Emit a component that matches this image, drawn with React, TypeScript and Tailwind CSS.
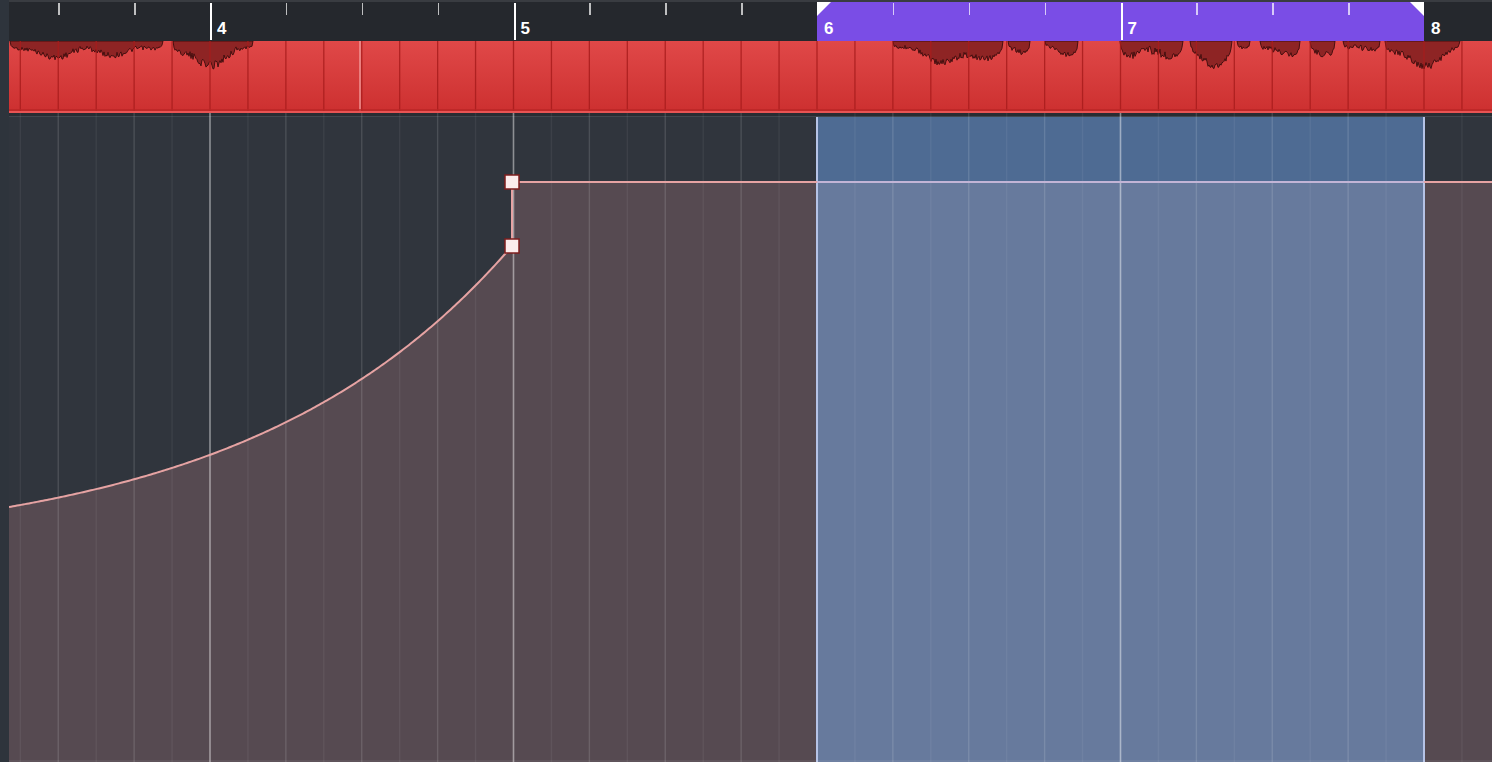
import React from "react";

const BAR = 303.5;
const EIGHTH = BAR / 8;
const LANE_TOP = 113;
const LANE_H = 762 - LANE_TOP;
const SEL_L = 817;
const SEL_R = 1424;

function rand(i: number, seed: number) {
  const s = Math.sin(i * 12.9898 + seed * 78.233) * 43758.5453;
  return s - Math.floor(s);
}

const segs: [number, number, number, number][] = [
  [10, 163, 20, 1],
  [173, 253, 29, 2],
  [893, 1003, 25, 3],
  [1008, 1030, 21, 4],
  [1045, 1078, 18, 5],
  [1120, 1183, 27, 6],
  [1190, 1232, 25, 7],
  [1237, 1250, 14, 8],
  [1260, 1300, 21, 9],
  [1310, 1335, 21, 10],
  [1343, 1380, 19, 11],
  [1385, 1460, 25, 12],
];

function wave(x0: number, x1: number, depth: number, seed: number) {
  let d = `M${x0 - 9} 0`;
  for (let x = x0; x <= x1; x++) {
    const t = (x - x0) / (x1 - x0);
    const env = Math.pow(Math.sin(Math.PI * t), 0.35);
    const slow =
      0.68 + 0.2 * Math.sin(x * 0.11 + seed * 1.7) + 0.14 * Math.sin(x * 0.037 + seed);
    const n = (rand(x, seed) - 0.5) * 0.3;
    const y = Math.max(0, depth * env * (slow + n));
    d += ` L${x - 9} ${y.toFixed(1)}`;
  }
  d += ` L${x1 - 9} 0 Z`;
  return d;
}

const eighths: { x: number; k: number }[] = [];
for (let k = -5; k <= 34; k++) {
  const x = 210 + k * EIGHTH;
  if (x > 9 && x < 1492) eighths.push({ x, k });
}

const curveY = (x: number) => {
  const t = (x - 9) / (512 - 9);
  return 507 - (261 * (Math.exp(1.9 * t) - 1)) / (Math.exp(1.9) - 1);
};
const curvePts: string[] = [];
for (let x = 9; x <= 512; x += 2) {
  curvePts.push(`${(x - 9).toFixed(1)} ${(curveY(x) - LANE_TOP).toFixed(2)}`);
}
curvePts.push(`${512 - 9} ${246 - LANE_TOP}`);
const curveD = "M" + curvePts.join(" L");
const W = 1483;
const fillD =
  curveD +
  ` L${512 - 9} ${182 - LANE_TOP} L${W} ${182 - LANE_TOP} L${W} ${LANE_H} L0 ${LANE_H} Z`;

function Ruler() {
  const bars = [3, 4, 5, 6, 7, 8];
  return (
    <div className="h-[41px] shrink-0 border-t-2 border-[#393c41] bg-[#25282d] overflow-hidden">
      <div className="flex h-full ml-[-102.5px]">
        {bars.map((b) => {
          const purple = b === 6 || b === 7;
          const showLine = b === 3 || b === 4 || b === 5 || b === 7;
          return (
            <div
              key={b}
              className={
                "relative flex w-[303.5px] shrink-0 h-full " + (purple ? "bg-[#7a4de6]" : "")
              }
            >
              {b === 6 && (
                <div className="absolute left-0 top-0 w-0 h-0 border-t-[14px] border-t-white border-r-[14px] border-r-transparent" />
              )}
              {b === 7 && (
                <div className="absolute right-0 top-0 w-0 h-0 border-t-[14px] border-t-white border-l-[14px] border-l-transparent" />
              )}
              {[0, 1, 2, 3].map((q) => (
                <div key={q} className="flex items-start w-[75.875px] shrink-0 h-full">
                  {q === 0 ? (
                    <>
                      {showLine && <div className="w-[2px] h-[37px] mt-[1px] bg-white" />}
                      {b !== 3 && (
                        <span
                          className={
                            "mt-[18px] text-[17px] font-bold text-white leading-none " +
                            (showLine ? "ml-[5px]" : "ml-[7px]")
                          }
                        >
                          {b}
                        </span>
                      )}
                    </>
                  ) : (
                    <div className="w-[1.5px] h-[12px] mt-[1px] bg-white/70" />
                  )}
                </div>
              ))}
            </div>
          );
        })}
      </div>
    </div>
  );
}

function Clip() {
  return (
    <div className="h-[72px] shrink-0 bg-linear-to-b from-[#e04848] to-[#cd3030] border-b-2 border-[#e85454]">
      <svg width={W} height={70} className="block">
        {segs.map(([a, b, d, s]) => (
          <path
            key={s}
            d={wave(a, b, d, s)}
            fill="#8e2424"
            stroke="#3a0c0c"
            strokeWidth={0.9}
            strokeLinejoin="round"
          />
        ))}
        {eighths.map(({ x, k }) => (
          <line
            key={k}
            x1={x - 9}
            x2={x - 9}
            y1={0}
            y2={70}
            stroke="#a81c1c"
            strokeOpacity={0.85}
            strokeWidth={1.3}
          />
        ))}
        <line x1={360 - 9} x2={360 - 9} y1={0} y2={70} stroke="#f4a2a2" strokeWidth={1.3} />
        <line x1={0} x2={W} y1={69} y2={69} stroke="#b92626" strokeWidth={1.5} />
      </svg>
    </div>
  );
}

function Lane() {
  const ly = (y: number) => y - LANE_TOP;
  const lineY = ly(182);
  return (
    <div className="flex-1 min-h-0">
      <svg width={W} height={LANE_H} className="block">
        <rect x={0} y={0} width={W} height={LANE_H} fill="#30353d" />
        <path d={fillD} fill="#564a51" />
        <rect x={SEL_L - 9} y={4} width={SEL_R - SEL_L} height={lineY - 4} fill="#4e6b93" />
        <rect
          x={SEL_L - 9}
          y={lineY}
          width={SEL_R - SEL_L}
          height={LANE_H - lineY}
          fill="#677a9d"
        />
        <rect x={0} y={0} width={W} height={3} fill="#282c32" />
        <rect x={0} y={3} width={W} height={1} fill="#41464e" />
        {eighths.map(({ x, k }) => {
          const isBar = ((k % 8) + 8) % 8 === 0;
          const isBeat = ((k % 2) + 2) % 2 === 0;
          const edge = Math.abs(x - SEL_L) < 2 || Math.abs(x - SEL_R) < 2;
          if (edge) {
            return (
              <line
                key={k}
                x1={x - 9}
                x2={x - 9}
                y1={4}
                y2={LANE_H}
                stroke="#b5c3e6"
                strokeWidth={2}
              />
            );
          }
          return (
            <line
              key={k}
              x1={x - 9}
              x2={x - 9}
              y1={0}
              y2={LANE_H}
              stroke="#ffffff"
              strokeOpacity={isBar ? 0.45 : isBeat ? 0.13 : 0.06}
              strokeWidth={isBar ? 1.6 : 1.4}
            />
          );
        })}
        <path d={curveD} fill="none" stroke="#e6a3a3" strokeWidth={2} />
        <line x1={503} x2={503} y1={ly(246)} y2={lineY} stroke="#e6a3a3" strokeWidth={2} />
        <line x1={503} x2={SEL_L - 9} y1={lineY} y2={lineY} stroke="#e6a3a3" strokeWidth={2} />
        <line
          x1={SEL_L - 9}
          x2={SEL_R - 9}
          y1={lineY}
          y2={lineY}
          stroke="#c2b4d6"
          strokeWidth={2}
        />
        <line x1={SEL_R - 9} x2={W} y1={lineY} y2={lineY} stroke="#e6a3a3" strokeWidth={2} />
        <rect
          x={496}
          y={lineY - 7}
          width={14}
          height={14}
          fill="#fcecec"
          stroke="#7e1e1e"
          strokeWidth={1.5}
        />
        <rect
          x={496}
          y={ly(246) - 7}
          width={14}
          height={14}
          fill="#fcecec"
          stroke="#7e1e1e"
          strokeWidth={1.5}
        />
        <rect x={0} y={LANE_H - 2} width={W} height={2} fill="#ffffff" fillOpacity={0.06} />
      </svg>
    </div>
  );
}

export default function App() {
  return (
    <div className="w-[1492px] h-[762px] flex overflow-hidden bg-[#2e343c] font-['Liberation_Sans',Arial,sans-serif]">
      <div className="w-[9px] shrink-0 bg-[#2e343c]" />
      <div className="flex-1 min-w-0 flex flex-col">
        <Ruler />
        <Clip />
        <Lane />
      </div>
    </div>
  );
}
